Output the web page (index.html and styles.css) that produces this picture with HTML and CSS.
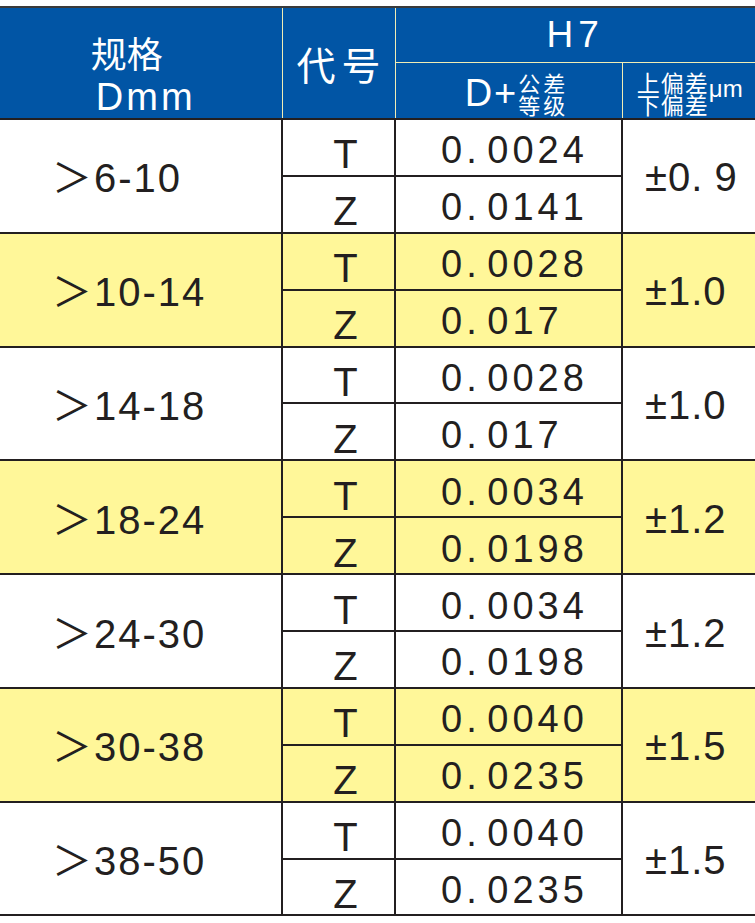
FILE: index.html
```html
<!DOCTYPE html>
<html lang="zh">
<head>
<meta charset="utf-8">
<title>H7 规格表</title>
<link rel="stylesheet" href="styles.css">
</head>
<body>
<table class="spec">
  <colgroup>
    <col class="c-size"><col class="c-code"><col class="c-val"><col class="c-tol">
  </colgroup>
  <thead>
    <tr class="hr1">
      <th rowspan="2" class="h-size"><div class="h-size-cn">规格</div><div class="h-size-en">Dmm</div></th>
      <th rowspan="2" class="h-code">代号</th>
      <th colspan="2" class="h-h7">H7</th>
    </tr>
    <tr class="hr2">
      <th class="h-d"><span class="h-d-wrap"><span class="h-d-main">D+</span><span class="stack"><span>公差</span><span>等级</span></span></span></th>
      <th class="h-dev"><span class="h-dev-wrap"><span class="stack stack-dev"><span>上偏差</span><span>下偏差</span></span><span class="unit">μm</span></span></th>
    </tr>
  </thead>
  <tbody class="g">
    <tr><td rowspan="2" class="size">＞6-10</td><td class="code">T</td><td class="val">0. 0024</td><td rowspan="2" class="tol">±0. 9</td></tr>
    <tr><td class="code">Z</td><td class="val">0. 0141</td></tr>
  </tbody>
  <tbody class="g alt">
    <tr><td rowspan="2" class="size">＞10-14</td><td class="code">T</td><td class="val">0. 0028</td><td rowspan="2" class="tol">±1.0</td></tr>
    <tr><td class="code">Z</td><td class="val">0. 017</td></tr>
  </tbody>
  <tbody class="g">
    <tr><td rowspan="2" class="size">＞14-18</td><td class="code">T</td><td class="val">0. 0028</td><td rowspan="2" class="tol">±1.0</td></tr>
    <tr><td class="code">Z</td><td class="val">0. 017</td></tr>
  </tbody>
  <tbody class="g alt">
    <tr><td rowspan="2" class="size">＞18-24</td><td class="code">T</td><td class="val">0. 0034</td><td rowspan="2" class="tol">±1.2</td></tr>
    <tr><td class="code">Z</td><td class="val">0. 0198</td></tr>
  </tbody>
  <tbody class="g">
    <tr><td rowspan="2" class="size">＞24-30</td><td class="code">T</td><td class="val">0. 0034</td><td rowspan="2" class="tol">±1.2</td></tr>
    <tr><td class="code">Z</td><td class="val">0. 0198</td></tr>
  </tbody>
  <tbody class="g alt">
    <tr><td rowspan="2" class="size">＞30-38</td><td class="code">T</td><td class="val">0. 0040</td><td rowspan="2" class="tol">±1.5</td></tr>
    <tr><td class="code">Z</td><td class="val">0. 0235</td></tr>
  </tbody>
  <tbody class="g">
    <tr><td rowspan="2" class="size">＞38-50</td><td class="code">T</td><td class="val">0. 0040</td><td rowspan="2" class="tol">±1.5</td></tr>
    <tr><td class="code">Z</td><td class="val">0. 0235</td></tr>
  </tbody>
</table>
</body>
</html>
```

FILE: styles.css
```css
html, body {
  margin: 0;
  padding: 0;
  background: #ffffff;
}

body {
  font-family: "Liberation Sans", "Noto Sans CJK SC", sans-serif;
  color: #231f20;
}

.spec {
  margin-top: 6px;
  width: 755px;
  table-layout: fixed;
  border-collapse: collapse;
  border-top: 2px solid #3a3a3a;
  border-bottom: 2px solid #3a3a3a;
  border-left: hidden;
  border-right: hidden;
}

.c-size { width: 282px; }
.c-code { width: 113px; }
.c-val { width: 227px; }
.c-tol { width: 133px; }

/* ---------- header ---------- */
.spec th {
  background: #0155a5;
  color: #ffffff;
  font-weight: normal;
  border: 1px solid #f1edb4;
  padding: 0;
  text-align: center;
  vertical-align: middle;
  line-height: 1;
}

.hr1 { height: 55px; }
.hr2 { height: 57px; }

.spec th.h-size {
  vertical-align: top;
}

.h-size-cn {
  font-family: "Noto Sans CJK SC", sans-serif;
  font-size: 36px;
  line-height: 40px;
  padding-right: 28px;
  margin-top: 24px;
}

.h-size-en {
  font-size: 38px;
  letter-spacing: 3px;
  line-height: 40px;
  margin-top: 5px;
  padding-left: 10px;
}

.spec th.h-code {
  font-family: "Noto Sans CJK SC", sans-serif;
  font-size: 39px;
  letter-spacing: 6px;
  padding-left: 6px;
}

.h-h7 {
  font-size: 37px;
  letter-spacing: 5px;
}

.h-d-wrap,
.h-dev-wrap {
  display: inline-flex;
  align-items: center;
}

.h-d-wrap { margin-left: 16px; margin-top: 6px; }

.h-d-main {
  font-size: 38px;
  letter-spacing: 2px;
}

.stack {
  display: flex;
  flex-direction: column;
  font-family: "Noto Sans CJK SC", sans-serif;
  font-size: 22px;
  line-height: 22px;
  letter-spacing: 3px;
  text-align: left;
}

.stack-dev {
  font-size: 23px;
  letter-spacing: 1px;
}

.h-dev-wrap {
  align-items: flex-start;
  margin-left: 2px;
  margin-top: 6px;
}

.unit {
  font-size: 24px;
  margin-top: 6px;
  margin-left: 0;
}

/* ---------- body ---------- */
.g tr { height: 56.9px; }

.g td {
  border: 2px solid #231f20;
  padding: 0;
  vertical-align: middle;
  line-height: 40px;
  background: #ffffff;
}

.g.alt td { background: #fff799; }

.g td.size {
  font-size: 40px;
  letter-spacing: 2px;
  text-align: left;
  padding-left: 52px;
  padding-top: 5px;
}

.g td.code {
  font-size: 40px;
  text-align: center;
  padding-left: 14px;
  padding-top: 14px;
}

.g td.val {
  font-size: 38px;
  letter-spacing: 4px;
  word-spacing: -8px;
  text-align: left;
  padding-left: 45px;
  padding-top: 6px;
}

.g td.tol {
  font-size: 40px;
  letter-spacing: 1px;
  word-spacing: -1px;
  text-align: left;
  padding-left: 22px;
  padding-top: 3px;
}
```
